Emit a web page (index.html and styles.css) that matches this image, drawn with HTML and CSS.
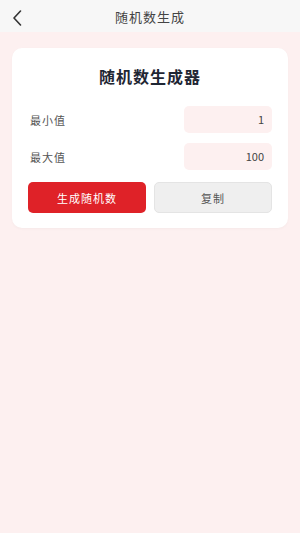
FILE: index.html
```html
<!DOCTYPE html>
<html lang="zh-CN">
<head>
  <meta charset="UTF-8" />
  <title>随机数生成</title>
  <link rel="stylesheet" href="styles.css">
</head>
<body>
  <div class="topbar">
    <span class="back">
      <svg width="10" height="16" viewBox="0 0 10 16"><path d="M8.5 1 L2 8 L8.5 15" fill="none" stroke="#333" stroke-width="1.6" stroke-linecap="round" stroke-linejoin="round"/></svg>
    </span>
    <span class="topbar-title">随机数生成</span>
  </div>

  <div class="content">
    <div class="card">
      <h2>随机数生成器</h2>
      <div class="row">
        <label>最小值</label>
        <div class="field">1</div>
      </div>
      <div class="row">
        <label>最大值</label>
        <div class="field">100</div>
      </div>
      <div class="buttons">
        <button class="btn btn-red">生成随机数</button>
        <button class="btn btn-gray">复制</button>
      </div>
    </div>
  </div>
</body>
</html>
```

FILE: styles.css
```css
html, body {
  margin: 0;
  height: 100%;
}

body {
  font-family: "Noto Sans CJK SC", "DejaVu Sans", sans-serif;
  background: #fdf0f0;
  color: #333;
}

.topbar {
  height: 32px;
  background: #f7f7f7;
  display: flex;
  align-items: center;
  justify-content: center;
  position: relative;
}

.back {
  position: absolute;
  left: 12px;
  top: 7px;
}

.topbar-title {
  font-size: 13px;
  color: #444;
  letter-spacing: 1px;
}

.content {
  padding: 16px 12px;
}

.card {
  background: #fff;
  border-radius: 10px;
  padding: 14px 16px 15px;
  box-shadow: 0 1px 3px rgba(0,0,0,0.03);
}

.card h2 {
  margin: 0 0 16px;
  text-align: center;
  font-size: 16px;
  font-weight: bold;
  color: #1f2633;
  letter-spacing: 1px;
  line-height: 28px;
}

.row {
  display: flex;
  align-items: center;
  justify-content: space-between;
  margin-bottom: 10px;
  padding-left: 2px;
}

.row label {
  font-size: 11px;
  color: #555;
  letter-spacing: 1px;
}

.field {
  width: 88px;
  height: 27px;
  box-sizing: border-box;
  background: #fdf0f0;
  border-radius: 5px;
  text-align: right;
  padding-right: 8px;
  line-height: 27px;
  font-size: 11px;
  color: #444;
}

.buttons {
  display: grid;
  grid-template-columns: 1fr 1fr;
  gap: 8px;
  margin-top: 12px;
}

.btn {
  height: 31px;
  border-radius: 5px;
  font-family: inherit;
  font-size: 11px;
  letter-spacing: 1px;
  cursor: pointer;
}

.btn-red {
  background: #df2228;
  color: #fff;
  border: none;
}

.btn-gray {
  background: #efefef;
  color: #555;
  border: 1px solid #e4e4e4;
}
```
